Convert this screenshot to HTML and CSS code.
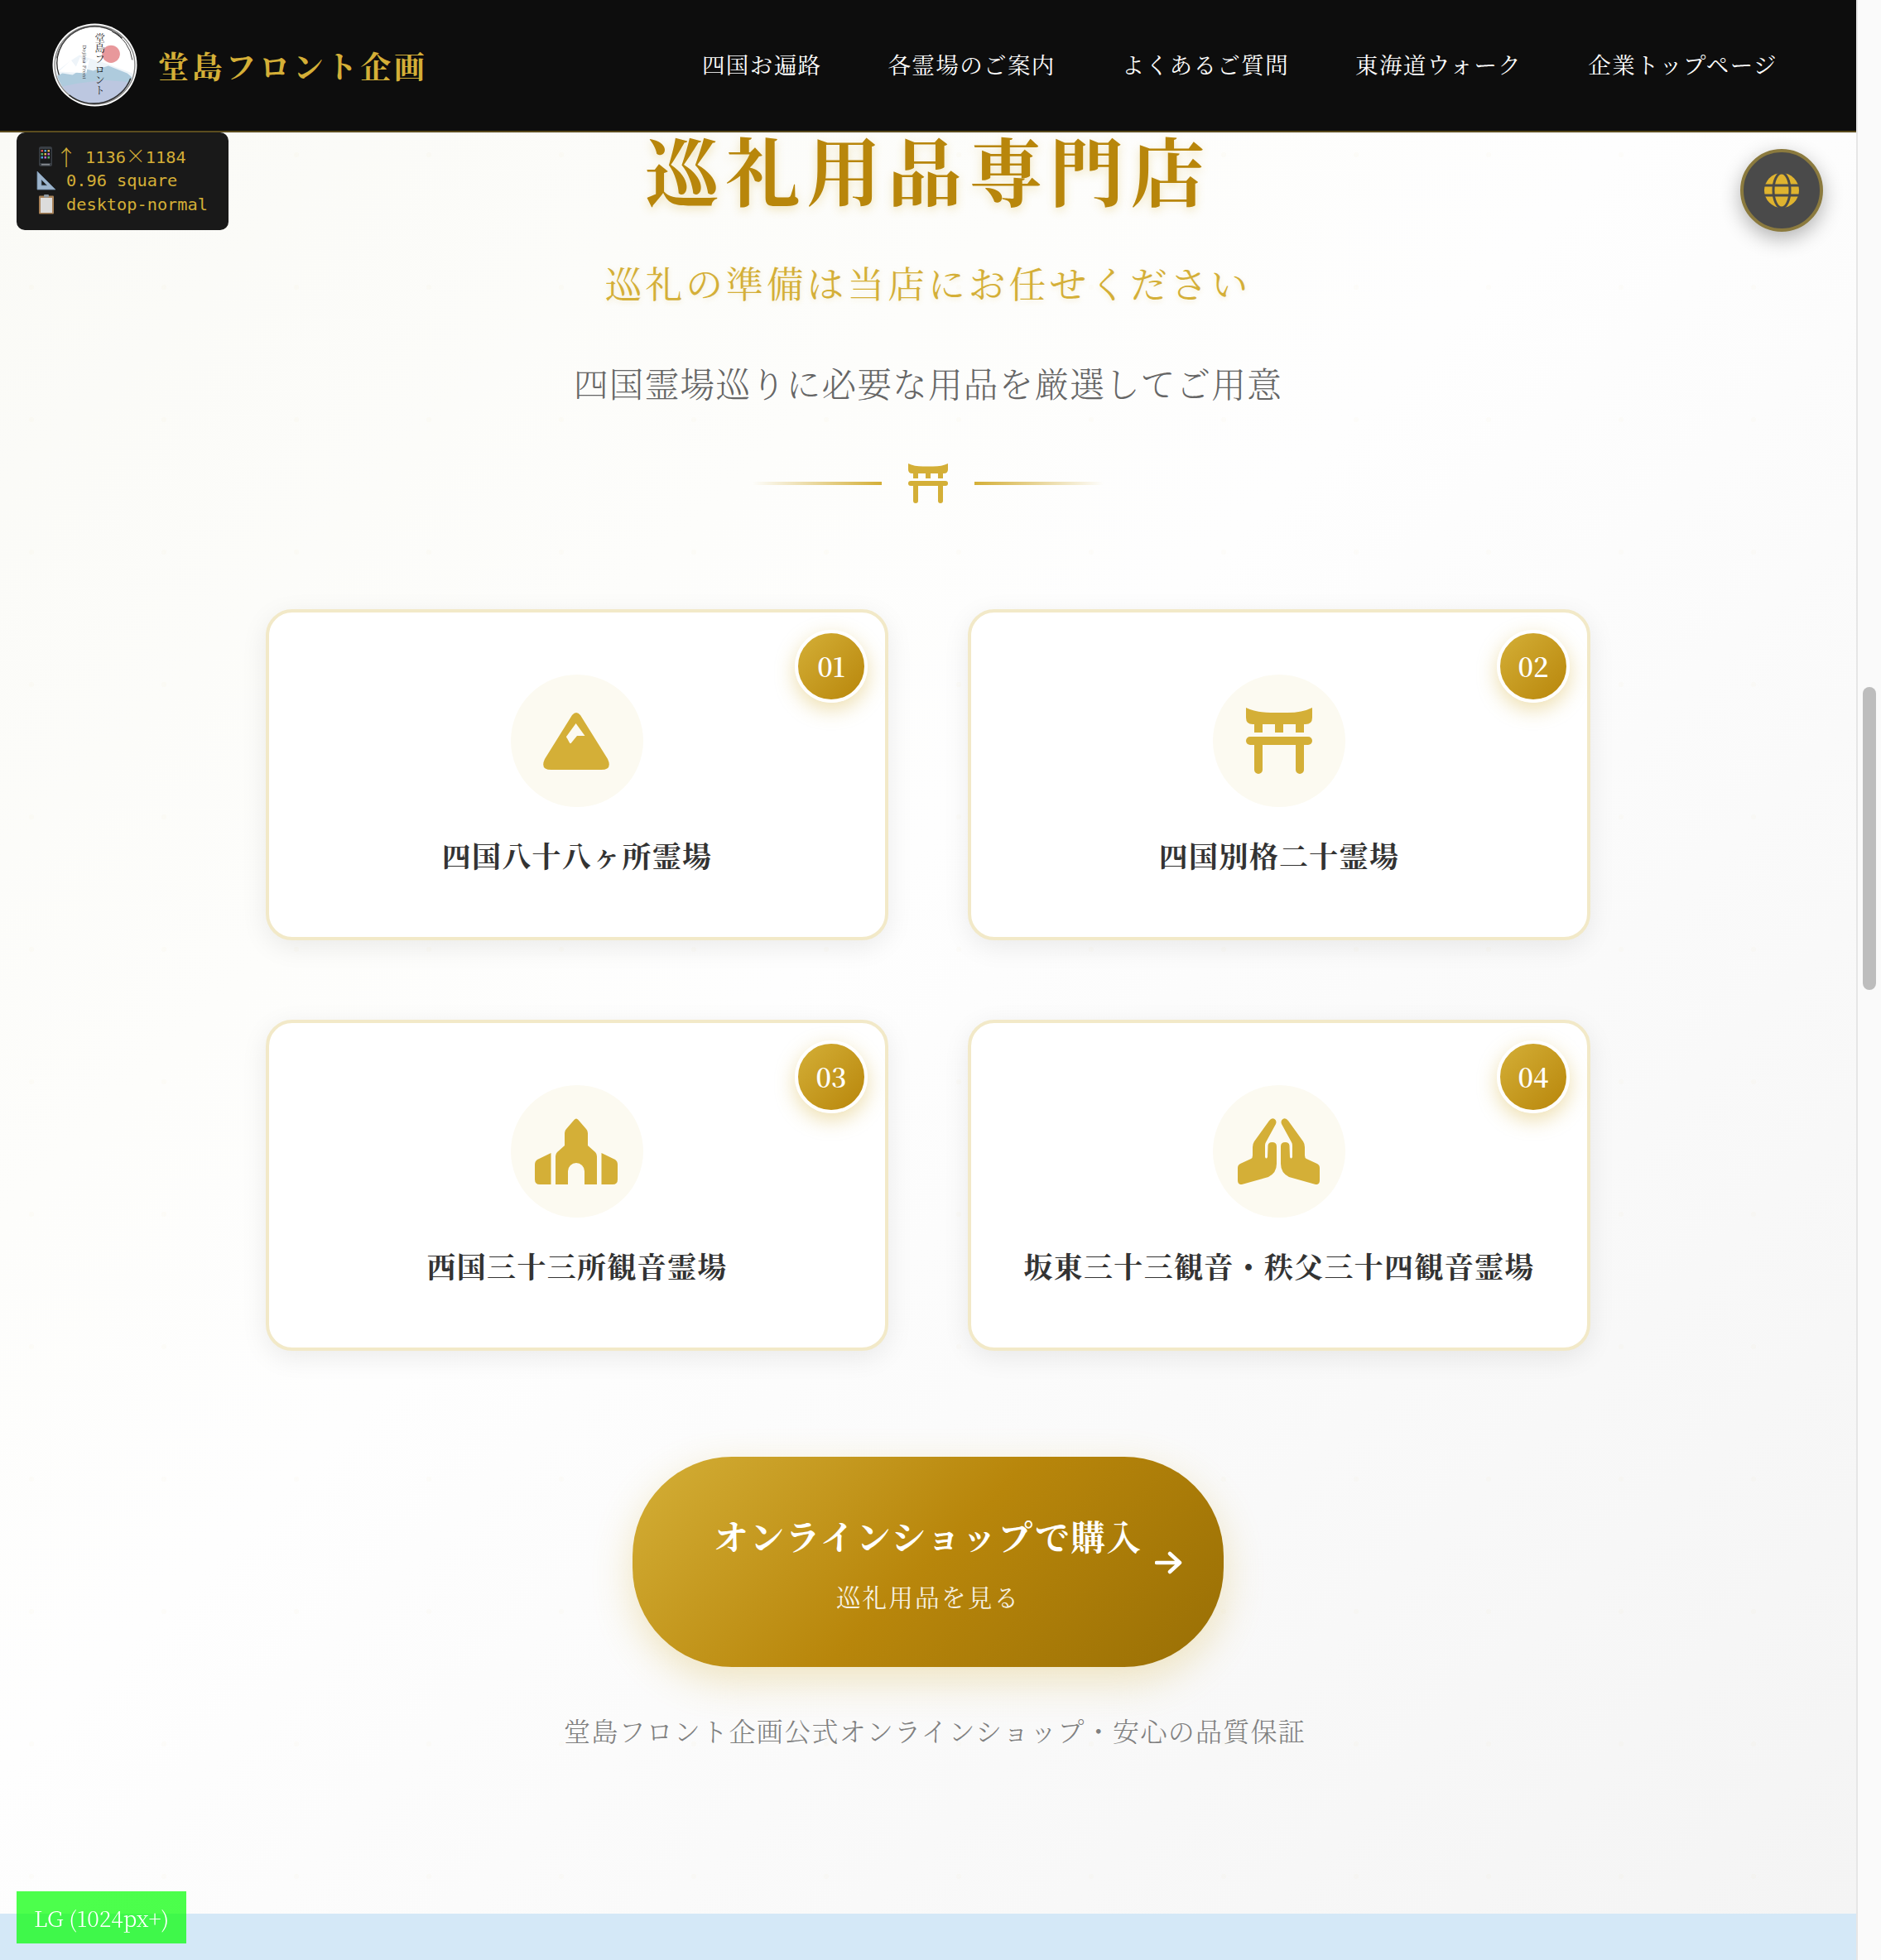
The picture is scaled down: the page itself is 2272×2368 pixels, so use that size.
FILE: index.html
```html
<!DOCTYPE html>
<html lang="ja">
<head>
<meta charset="utf-8">
<title>巡礼用品専門店</title>
<link rel="stylesheet" href="styles.css">
</head>
<body>
<div class="app">
  <div class="viewport">
    <header class="site-header">
      <a class="brand">
        <svg class="brand-logo" viewBox="0 0 100 100" width="103" height="101" preserveAspectRatio="none">
          <defs><clipPath id="logoClip"><circle cx="50" cy="50" r="46"/></clipPath></defs>
          <circle cx="50" cy="50" r="49.5" fill="#fff"/>
          <g clip-path="url(#logoClip)">
            <circle cx="69" cy="37" r="10.5" fill="#e8989b"/>
            <path d="M0 62 L20 46 L32 38 L44 42 L60 47 L100 62 V100 H0Z" fill="#eef4f9"/>
            <path d="M0 66 L12 60 L24 62 L36 54 L48 57 L66 51 L88 60 L100 70 V100 H0Z" fill="#aecbdd"/>
            <path d="M0 78 L30 72 L60 68 L86 70 L100 76 V100 H0Z" fill="#bcc7e0"/>
            <path d="M8 58 L22 44 L28 52 L33 40 L38 50 L44 42 L40 60Z" fill="#fff"/>
          </g>
          <circle cx="50" cy="50" r="47" fill="none" stroke="#8a8a8a" stroke-width="1.4"/>
          <path d="M8 62 A44 44 0 0 1 82 18" fill="none" stroke="#2e2e2e" stroke-width="1.3"/>
          <path d="M20 86 A46 46 0 0 0 92 66" fill="none" stroke="#2e2e2e" stroke-width="1.5"/>
          <path d="M5 42 A46 46 0 0 1 60 5" fill="none" stroke="#555" stroke-width=".8"/>
          <path d="M70 10 A44 44 0 0 1 94 44" fill="none" stroke="#333" stroke-width=".9"/>
          <text class="logo-jp" x="56" y="12">堂島フロント</text>
          <text class="logo-en" transform="translate(36 26) rotate(90)">Dojima Front</text>
        </svg>
        <span class="brand-name">堂島フロント企画</span>
      </a>
      <nav class="site-nav">
        <a>四国お遍路</a>
        <a>各霊場のご案内</a>
        <a>よくあるご質問</a>
        <a>東海道ウォーク</a>
        <a>企業トップページ</a>
      </nav>
    </header>

    <main class="shop">
      <h1 class="shop-title">巡礼用品専門店</h1>
      <p class="shop-sub">巡礼の準備は当店にお任せください</p>
      <p class="shop-tagline">四国霊場巡りに必要な用品を厳選してご用意</p>
      <div class="divider">
        <span class="divider-line divider-left"></span>
        <svg class="torii-small" viewBox="0 0 80 80" width="48" height="48"><use href="#torii"/></svg>
        <span class="divider-line divider-right"></span>
      </div>

      <section class="cards">
        <article class="card">
          <span class="badge">01</span>
          <div class="card-icon">
            <svg class="icon-shift" viewBox="0 0 80 70" width="80" height="70"><path fill-rule="evenodd" d="M35 4 Q40 -2 45 4 L78 57 Q84 70 70 70 H10 Q-4 70 2 57 Z M39.6 14 L28 30 Q28 31 29 32 L32 37.5 Q33 39 34 37.5 L41 29 H50.5 Z" class="gold"/></svg>
          </div>
          <h2 class="card-title">四国八十八ヶ所霊場</h2>
        </article>
        <article class="card">
          <span class="badge">02</span>
          <div class="card-icon">
            <svg viewBox="0 0 80 80" width="80" height="80">
              <g id="torii" class="gold">
                <path d="M0 0 Q12 6 30 6 H50 Q68 6 80 0 V12 Q80 20 72 20 H70 V30 H60 V20 H45 V30 H35 V20 H20 V30 H10 V20 H8 Q0 20 0 12 Z"/>
                <rect x="0" y="35" width="80" height="10" rx="5"/>
                <path d="M10 45 H20 V75 A5 5 0 0 1 10 75 Z M60 45 H70 V75 A5 5 0 0 1 60 75 Z"/>
              </g>
            </svg>
          </div>
          <h2 class="card-title">四国別格二十霊場</h2>
        </article>
        <article class="card">
          <span class="badge">03</span>
          <div class="card-icon">
            <svg class="icon-shift" viewBox="0 0 100 80" width="100" height="80"><path class="gold" fill-rule="evenodd" d="M47.5 2 Q50 -1 52.5 2 L62 13 Q64 15 64 18 V33 L73 41 Q75 43 75 46 V80 H60 V64 A10 10 0 0 0 40 64 V80 H25 V46 Q25 43 27 41 L36 33 V18 Q36 15 38 13 Z M19.5 42 V80 H6 Q0 80 0 74 V56 Q0 52 3 50 Z M80.5 42 L97 50 Q100 52 100 56 V74 Q100 80 94 80 H80.5 Z"/></svg>
          </div>
          <h2 class="card-title">西国三十三所観音霊場</h2>
        </article>
        <article class="card">
          <span class="badge">04</span>
          <div class="card-icon">
            <svg class="icon-shift" viewBox="0 0 100 80" width="100" height="80">
              <g class="gold">
                <path d="M39 3 Q42 -1 45.500 1 Q48.500 3 47 7 L35 29 Q34 30.500 34 33 V47 Q35.500 50 37 47 L37.500 33 Q38 29 42.500 29 Q48 29 48 34 V55 Q48 66 38 71 L6 80 Q1 80.500 1 75 V60 Q1 56.500 4 55 L17 49 Q19 48 19 45 V35 Q19 31 21 28 Z"/>
                <path d="M39 3 Q42 -1 45.500 1 Q48.500 3 47 7 L35 29 Q34 30.500 34 33 V47 Q35.500 50 37 47 L37.500 33 Q38 29 42.500 29 Q48 29 48 34 V55 Q48 66 38 71 L6 80 Q1 80.500 1 75 V60 Q1 56.500 4 55 L17 49 Q19 48 19 45 V35 Q19 31 21 28 Z" transform="translate(101 0) scale(-1 1)"/>
              </g>
            </svg>
          </div>
          <h2 class="card-title">坂東三十三観音・秩父三十四観音霊場</h2>
        </article>
      </section>

      <a class="buy-button">
        <span class="buy-text">
          <span class="buy-title">オンラインショップで購入</span>
          <span class="buy-sub">巡礼用品を見る</span>
        </span>
        <svg class="buy-arrow" viewBox="0 0 33 28" width="33" height="28"><path d="M2 14 H29 M18 3 L30 14 L18 25" fill="none" stroke="#fff" stroke-width="4.500" stroke-linecap="round" stroke-linejoin="round"/></svg>
      </a>
      <p class="shop-note">堂島フロント企画公式オンラインショップ・安心の品質保証</p>
    </main>
    <div class="next-section"></div>
  </div>
  <div class="scrollbar"><span class="scrollbar-thumb"></span></div>
</div>

<aside class="debug-panel">
  <div class="debug-row">
    <svg class="debug-icon" viewBox="0 0 18 24" width="18" height="24"><rect x="1" y="0" width="16" height="24" rx="2.500" fill="#3a3f45"/><rect x="2.500" y="3" width="13" height="17" fill="#17191b"/><g fill="#e0574f"><rect x="3.500" y="4" width="2.500" height="2.500"/></g><g fill="#4fa3e0"><rect x="7.500" y="4" width="2.500" height="2.500"/><rect x="3.500" y="12" width="2.500" height="2.500"/></g><g fill="#e0b84f"><rect x="11.500" y="4" width="2.500" height="2.500"/><rect x="7.500" y="8" width="2.500" height="2.500"/></g><g fill="#58b368"><rect x="3.500" y="8" width="2.500" height="2.500"/><rect x="11.500" y="12" width="2.500" height="2.500"/></g><g fill="#c36ad0"><rect x="11.500" y="8" width="2.500" height="2.500"/><rect x="7.500" y="12" width="2.500" height="2.500"/></g><rect x="4" y="21" width="10" height="1.500" fill="#8a8f95"/></svg>
    <span class="debug-arrow">↑</span><span>1136<span class="debug-times">×</span>1184</span>
  </div>
  <div class="debug-row">
    <svg class="debug-icon-wide" viewBox="0 0 24 24" width="24" height="24"><path fill-rule="evenodd" d="M1 1 L23 23 H1 Z M6 11 V18 H13 Z" fill="#9db4cc" stroke="#6f8aa6" stroke-width=".8"/></svg>
    <span>0.96 square</span>
  </div>
  <div class="debug-row">
    <svg class="debug-icon-wide" viewBox="0 0 24 24" width="24" height="24"><rect x="3" y="1.500" width="18" height="22" rx="1" fill="#a9835a"/><rect x="5" y="4" width="14" height="18" fill="#dcdcdc"/><rect x="9" y="0" width="6" height="3.500" rx="1" fill="#8f9aa3"/></svg>
    <span>desktop-normal</span>
  </div>
</aside>

<button class="globe-button" type="button">
  <svg viewBox="0 0 42 42" width="42" height="42"><circle cx="21" cy="21" r="21" fill="#dfb32f"/><g fill="none" stroke="#4a4a4a" stroke-width="3"><ellipse cx="21" cy="21" rx="10" ry="21"/><path d="M0 15 H42 M0 27 H42"/></g></svg>
</button>

<div class="breakpoint-badge">LG (1024px+)</div>
</body>
</html>
```
FILE: styles.css
```css
* { box-sizing: border-box; }
html, body { margin: 0; padding: 0; height: 2368px; overflow: hidden; }
body {
  font-family: "Noto Serif CJK JP", "Noto Serif JP", "Liberation Serif", "Noto Sans CJK JP", serif;
  background: #fff;
  color: #333;
}
.app { display: flex; width: 2272px; height: 2368px; }
.viewport { flex: 1; min-width: 0; display: flex; flex-direction: column; }

/* header */
.site-header {
  flex: none;
  height: 160px;
  display: flex;
  align-items: center;
  justify-content: space-between;
  padding: 0 95px 2px 63px;
  background: #0d0d0d;
  border-bottom: 2px solid #5b4c1e;
}
.brand { display: flex; align-items: center; gap: 25px; }
.brand-logo { display: block; }
.logo-jp { font-size: 12px; fill: #222; writing-mode: vertical-rl; letter-spacing: .5px; font-weight: 400; }
.logo-en { font-size: 6.5px; fill: #333; font-family: "Liberation Serif", serif; letter-spacing: .5px; }
.brand-name { margin-top: 3px; font-size: 37px; font-weight: 700; letter-spacing: 3.7px; color: #d4af37; line-height: 1; }
.site-nav { display: flex; gap: 80px; }
.site-nav a { font-size: 27.5px; letter-spacing: 1.4px; color: #fff; line-height: 1; }

/* main */
.shop {
  flex: 1;
  display: flex;
  flex-direction: column;
  align-items: center;
  background-color: #fff;
  background-image:
    radial-gradient(circle, rgba(212,175,55,.025) 3px, transparent 3px),
    linear-gradient(135deg, #fafaf6 0%, #fdfdfb 30%, #fefefe 45%, #f4f4f4 100%);
  background-size: 160px 160px, 100% 100%;
  background-position: -42px -53px, 0 0;
}
.shop-title {
  margin: -1px 0 0;
  font-size: 90px;
  line-height: 88px;
  font-weight: 700;
  letter-spacing: 7.8px;
  color: #b8860b;
  text-shadow: 0 4px 12px rgba(212,175,55,.3);
}
.shop-sub {
  margin: 72px 0 0;
  font-size: 44.8px;
  line-height: 44px;
  letter-spacing: 4px;
  font-weight: 400;
  color: #d4af37;
  text-shadow: 0 2px 6px rgba(212,175,55,.2);
}
.shop-tagline {
  margin: 78.5px 0 0;
  font-size: 41.6px;
  line-height: 40px;
  letter-spacing: 1.2px;
  font-weight: 300;
  color: #666;
}
.divider { margin-top: 78px; display: flex; align-items: center; gap: 32px; }
.divider-line { display: block; width: 156px; height: 4px; }
.divider-left { background: linear-gradient(90deg, transparent, #d4af37); }
.divider-right { background: linear-gradient(90deg, #d4af37, transparent); }
.torii-small { display: block; }
.gold { fill: #d4af37; }

/* cards */
.cards {
  margin-top: 128px;
  width: 1600px;
  display: grid;
  grid-template-columns: 1fr 1fr;
  gap: 96px;
}
.card {
  position: relative;
  display: flex;
  flex-direction: column;
  align-items: center;
  padding: 75px 24px 77px;
  background: #fff;
  border: 4px solid #f2e9c8;
  border-radius: 32px;
  box-shadow: 0 8px 32px rgba(0,0,0,.08);
}
.badge {
  position: absolute;
  top: 21px;
  right: 21px;
  width: 88px;
  height: 88px;
  padding-bottom: 2px;
  display: flex;
  align-items: center;
  justify-content: center;
  border: 4px solid #fff;
  border-radius: 50%;
  background: linear-gradient(135deg, #d4af37, #b8860b);
  box-shadow: 0 8px 24px rgba(212,175,55,.4);
  color: #fff;
  font-size: 32px;
  font-weight: 600;
}
.card-icon {
  width: 160px;
  height: 160px;
  display: flex;
  align-items: center;
  justify-content: center;
  border-radius: 50%;
  background: #fcfaf1;
}
.card-icon svg { display: block; }
.card-icon .icon-shift { margin-left: -2px; }
.card-title {
  margin: 36px 0 0;
  font-size: 35px;
  line-height: 44px;
  letter-spacing: 1.3px;
  font-weight: 700;
  color: #333;
}

/* button */
.buy-button {
  margin-top: 128px;
  display: flex;
  align-items: center;
  gap: 15px;
  padding: 72px 50px 70px 98px;
  border-radius: 120px;
  background: linear-gradient(135deg, #d4af37 0%, #b8860b 50%, #996f05 100%);
  box-shadow: 0 16px 48px rgba(212,175,55,.3);
  color: #fff;
}
.buy-text { display: flex; flex-direction: column; align-items: center; }
.buy-title { font-size: 41.6px; line-height: 46px; font-weight: 700; letter-spacing: 1.7px; }
.buy-sub { margin-top: 34px; font-size: 29.6px; line-height: 32px; letter-spacing: 2.2px; color: rgba(255,255,255,.9); font-weight: 400; }
.buy-arrow { display: block; }
.shop-note {
  margin: 60px 0 0;
  padding-left: 16px;
  font-size: 32px;
  line-height: 32px;
  letter-spacing: 1.28px;
  font-weight: 300;
  color: #808080;
}
.next-section { flex: none; height: 56px; background: #d4e8f7; }

/* scrollbar */
.scrollbar {
  flex: none;
  width: 30px;
  background: #fafafa;
  border-left: 2px solid #e6e6e6;
  padding: 830px 6px 0;
}
.scrollbar-thumb { display: block; height: 366px; border-radius: 8px; background: #bdbdbd; }

/* overlays */
.debug-panel {
  position: fixed;
  top: 160px;
  left: 20px;
  width: 256px;
  height: 118px;
  padding: 14px 0 0 26px;
  border-radius: 10px;
  background: #191919;
  color: #d4af37;
  font-family: "DejaVu Sans Mono", monospace;
  font-size: 20.3px;
}
.debug-row { display: flex; align-items: center; height: 29px; }
.debug-icon { display: block; margin-right: 3px; }
.debug-arrow { width: 36px; font-family: "Noto Sans CJK JP", sans-serif; font-size: 26px; font-weight: 300; line-height: 1; }
.debug-times { font-family: "Noto Sans CJK JP", sans-serif; font-size: 24px; font-weight: 300; line-height: 1; }
.debug-icon-wide { display: block; margin: 0 12px 0 -2px; }
.globe-button {
  position: fixed;
  top: 180px;
  left: 2102px;
  width: 100px;
  height: 100px;
  padding: 0;
  display: flex;
  align-items: center;
  justify-content: center;
  border: 4px solid #8b7a3e;
  border-radius: 50%;
  background: #4a4a4a;
  box-shadow: 0 8px 24px rgba(0,0,0,.3);
}
.globe-button svg { display: block; }
.breakpoint-badge {
  position: fixed;
  left: 20px;
  top: 2285px;
  width: 205px;
  height: 63px;
  display: flex;
  align-items: center;
  justify-content: center;
  background: rgba(0,255,0,.7);
  color: #fff;
  font-size: 26.4px;
  font-weight: 300;
}
```
